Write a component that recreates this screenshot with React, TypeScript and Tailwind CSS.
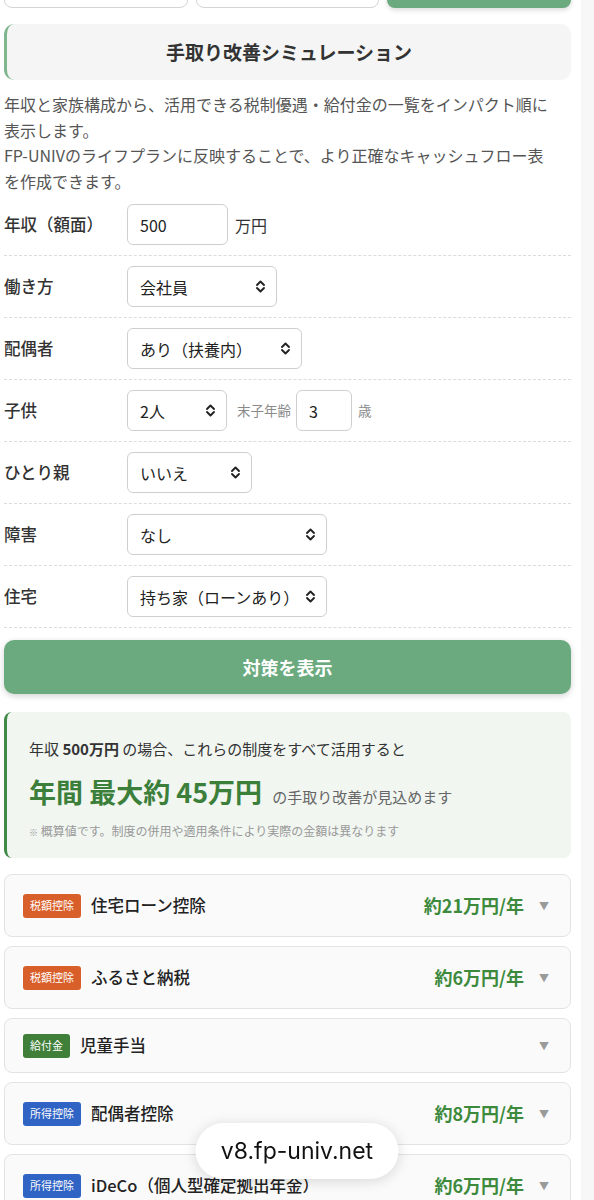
import React from "react";

const F = { fontFamily: '"Noto Sans CJK JP", "Noto Sans", sans-serif' };

function Chev() {
  return (
    <svg width="11" height="15" viewBox="0 0 11 15" fill="none" stroke="#222" strokeWidth="1.9" strokeLinecap="round" strokeLinejoin="round">
      <polyline points="2,6 5.5,2.5 9,6" />
      <polyline points="2,9 5.5,12.5 9,9" />
    </svg>
  );
}

function Select({ w, text }: { w: string; text: string }) {
  return (
    <div className={`${w} h-[41px] flex items-center justify-between pl-[12px] pr-[10px] bg-white border border-[#cfcfcf] rounded-[6px] text-[16px] text-[#222]`}>
      <span className="whitespace-nowrap">{text}</span>
      <Chev />
    </div>
  );
}

function Row({ label, children }: { label: string; children: React.ReactNode }) {
  return (
    <div className="flex items-center py-[10px] border-b border-dashed border-[#dcdcdc]">
      <div className="w-[123px] text-[16.5px] font-medium text-[#333]">{label}</div>
      <div className="flex items-center">{children}</div>
    </div>
  );
}

const badgeColor: Record<string, string> = {
  税額控除: "bg-[#d95f2a]",
  給付金: "bg-[#3f7f3a]",
  所得控除: "bg-[#2f63c4]",
};

function Card({ badge, title, amount }: { badge: string; title: string; amount?: string }) {
  return (
    <div className={`${amount ? "h-[63px]" : "h-[55px]"} flex items-center pl-[18px] pr-[21px] bg-[#fafafa] border border-[#e3e3e3] rounded-[8px]`}>
      <span className={`${badgeColor[badge]} text-white text-[11px] h-[24px] px-[7px] flex items-center rounded-[3px]`}>{badge}</span>
      <span className="ml-[10px] text-[16.5px] font-medium text-[#222] flex-1">{title}</span>
      {amount && <span className="text-[18px] font-bold text-[#3d8a3d]">{amount}</span>}
      <span className="ml-[15px] text-[10px] text-[#9a9a9a]">▼</span>
    </div>
  );
}

export default function App() {
  return (
    <div className="flex bg-[#f7f7f7] min-h-[1200px] overflow-hidden" style={F}>
      <div className="w-[581px] bg-white pl-[4px] pr-[10px] pb-[40px]">
        <div className="grid grid-cols-3 gap-[8px] -mt-[32px]">
          <div className="h-[40px] bg-white border border-[#d5d5d5] rounded-[8px]" />
          <div className="h-[40px] bg-white border border-[#d5d5d5] rounded-[8px]" />
          <div className="h-[40px] bg-[#6aaa7e] rounded-[8px] shadow-[0_2px_5px_rgba(0,0,0,0.15)]" />
        </div>

        <div className="mt-[16px] h-[56px] flex items-center justify-center bg-[#f5f5f5] border-l-[3px] border-[#7fb68e] rounded-[10px]">
          <h1 className="text-[19px] font-bold text-[#333]">手取り改善シミュレーション</h1>
        </div>

        <p className="mt-[12px] text-[16px] leading-[25.5px] text-[#555]">
          年収と家族構成から、活用できる税制優遇・給付金の一覧をインパクト順に
          <br />
          表示します。
          <br />
          FP-UNIVのライフプランに反映することで、より正確なキャッシュフロー表
          <br />
          を作成できます。
        </p>

        <div>
          <Row label="年収（額面）">
            <div className="w-[101px] h-[41px] flex items-center pl-[12px] bg-white border border-[#cfcfcf] rounded-[6px] text-[16px] text-[#222]">500</div>
            <span className="ml-[7px] text-[16px] text-[#333]">万円</span>
          </Row>
          <Row label="働き方">
            <Select w="w-[150px]" text="会社員" />
          </Row>
          <Row label="配偶者">
            <Select w="w-[175px]" text="あり（扶養内）" />
          </Row>
          <Row label="子供">
            <Select w="w-[100px]" text="2人" />
            <span className="ml-[10px] text-[13.5px] text-[#8a8a8a]">末子年齢</span>
            <div className="ml-[5px] w-[56px] h-[41px] flex items-center pl-[12px] bg-white border border-[#cfcfcf] rounded-[6px] text-[16px] text-[#222]">3</div>
            <span className="ml-[6px] text-[13.5px] text-[#8a8a8a]">歳</span>
          </Row>
          <Row label="ひとり親">
            <Select w="w-[125px]" text="いいえ" />
          </Row>
          <Row label="障害">
            <Select w="w-[200px]" text="なし" />
          </Row>
          <Row label="住宅">
            <Select w="w-[200px]" text="持ち家（ローンあり）" />
          </Row>
        </div>

        <button className="mt-[12px] w-full h-[54px] bg-[#6aaa7e] rounded-[10px] text-white text-[18px] font-bold shadow-[0_2px_6px_rgba(0,0,0,0.18)]">
          対策を表示
        </button>

        <div className="mt-[18px] bg-[#f1f6f1] border-l-[3px] border-[#3f8a46] rounded-[8px] pl-[22px] pr-[16px] pt-[26px] pb-[16px]">
          <div className="text-[15px] leading-[22px] text-[#333]">
            年収 <b className="font-bold">500万円</b> の場合、これらの制度をすべて活用すると
          </div>
          <div className="mt-[14px] flex items-baseline leading-[36px]">
            <span className="text-[27px] font-bold text-[#3b7f3b]">年間 最大約 45万円</span>
            <span className="ml-[10px] text-[15px] text-[#666]">の手取り改善が見込めます</span>
          </div>
          <div className="mt-[7px] text-[12px] leading-[18px] text-[#999]">
            <span className="text-[9px]">※</span> 概算値です。制度の併用や適用条件により実際の金額は異なります
          </div>
        </div>

        <div className="mt-[16px] flex flex-col gap-[9px]">
          <Card badge="税額控除" title="住宅ローン控除" amount="約21万円/年" />
          <Card badge="税額控除" title="ふるさと納税" amount="約6万円/年" />
          <Card badge="給付金" title="児童手当" />
          <Card badge="所得控除" title="配偶者控除" amount="約8万円/年" />
          <Card badge="所得控除" title="iDeCo（個人型確定拠出年金）" amount="約6万円/年" />
          <Card badge="所得控除" title="生命保険料控除" amount="約3万円/年" />
        </div>
      </div>
      <div className="flex-1" />

      <div className="fixed left-1/2 -translate-x-1/2 bottom-[21px] w-[203px] h-[56px] rounded-full bg-white shadow-[0_2px_14px_rgba(0,0,0,0.14)] flex items-center justify-center">
        <span className="text-[23px] text-[#111]" style={{ fontFamily: 'Inter, "Liberation Sans", sans-serif' }}>v8.fp-univ.net</span>
      </div>
    </div>
  );
}
